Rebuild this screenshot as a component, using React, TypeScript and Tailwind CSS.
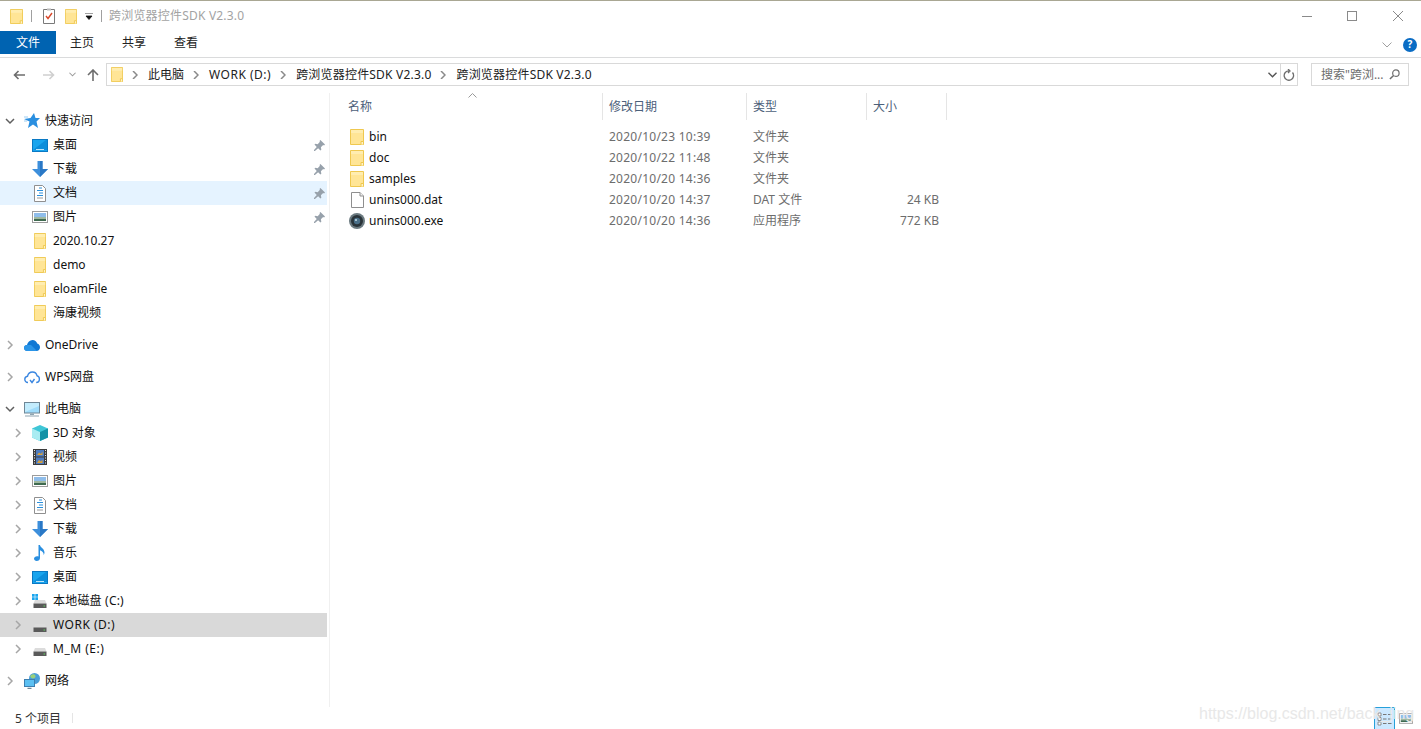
import React from 'react';

const FONT = "font-['Noto_Sans','Noto_Sans_CJK_SC',sans-serif]";

const Folder = ({ className = 'w-[14px] h-4' }: { className?: string }) => (
  <svg viewBox="0 0 14 16" className={className} preserveAspectRatio="none">
    <path d="M.5 .5h13v15H.5z" fill="#ffe596" stroke="#efc84f" />
    <path d="M1 1h12v3H1z" fill="#ffedb0" />
    <path d="M11 15.500v-3h2.500v3" fill="#fff3c8" stroke="#efc84f" />
  </svg>
);

const Chevron = ({ open, className = '' }: { open?: boolean; className?: string }) => (
  <svg viewBox="0 0 10 10" className={`w-[10px] h-[10px] ${className}`}>
    {open ? (
      <path d="M1 3l4 4 4-4" fill="none" stroke="#5f5f5f" strokeWidth="1.5" />
    ) : (
      <path d="M3 1l4 4-4 4" fill="none" stroke="#a6a6a6" strokeWidth="1.5" />
    )}
  </svg>
);

const Desktop = () => (
  <svg viewBox="0 0 16 13" className="w-4 h-[13px]">
    <rect x=".5" y=".5" width="15" height="12" fill="#1aa5ee" stroke="#0a79c4" />
    <path d="M1 11L14 1h1v10z" fill="#0d8edb" />
    <path d="M4 10.500h8" stroke="#bfe6fb" />
  </svg>
);

const Download = () => (
  <svg viewBox="0 0 16 16" className="w-4 h-4">
    <path d="M5.500 0h5v8H16l-8 8-8-8h5.500z" fill="#3d8fdc" />
    <path d="M8 0h2.500v8H16l-8 8z" fill="#2a78c6" />
  </svg>
);

const Doc = () => (
  <svg viewBox="0 0 12 17" className="w-3 h-[17px]">
    <path d="M.5.500h8l3 3v13H.5z" fill="#fff" stroke="#8f8f8f" />
    <path d="M5 3h3M3 5.500h6M5 8h4M3 10.500h6" stroke="#2b8fdb" />
    <path d="M3 13h6" stroke="#9a9a9a" />
  </svg>
);

const Picture = ({ className = 'w-4 h-3' }: { className?: string }) => (
  <svg viewBox="0 0 16 12" className={className}>
    <rect x=".5" y=".5" width="15" height="11" fill="#fff" stroke="#9c9c9c" />
    <rect x="2" y="2" width="12" height="4" fill="#8fbdea" />
    <rect x="2" y="6" width="12" height="2" fill="#9fb8a0" />
    <rect x="2" y="8" width="12" height="2" fill="#3f6a50" />
  </svg>
);

const OneDrive = () => (
  <svg viewBox="0 0 16 11" className="w-4 h-[11px]">
    <path d="M3.500 11C1 11 0 9.500 0 8c0-1.700 1.300-3 3-3 .7-2.800 2.800-5 5.500-5 2.300 0 4 1.400 4.700 3.500C15 4 16 5.500 16 7.300 16 9.500 14.500 11 12.500 11z" fill="#0f78d4" />
    <path d="M3.500 11C1 11 0 9.500 0 8c0-1.700 1.300-3 3-3h4l6 6z" fill="#2a95e8" />
  </svg>
);

const WpsCloud = () => (
  <svg viewBox="0 0 16 13" className="w-4 h-[13px]">
    <path d="M4 11.500C2 11.500 .8 10 .8 8.300 .8 6.700 2 5.500 3.500 5.300 4 3 6 1 8.500 1c2.300 0 4 1.500 4.500 3.700 1.500.3 2.400 1.700 2.400 3.300 0 2-1.300 3.500-3.200 3.500" fill="none" stroke="#3a86e0" strokeWidth="1.400" />
    <path d="M6 9l2 2.500L10.500 8" fill="none" stroke="#3a86e0" strokeWidth="1.400" />
  </svg>
);

const Computer = () => (
  <svg viewBox="0 0 16 15" className="w-4 h-[15px]">
    <rect x=".5" y=".5" width="15" height="10.500" fill="#9fdcfb" stroke="#6f8796" />
    <path d="M1 1h14v3L1 10z" fill="#c2ecfd" />
    <path d="M6 11.500h4v1.500H6z" fill="#8fa4b0" />
    <path d="M1 14h14" stroke="#8fa4b0" />
  </svg>
);

const Cube = () => (
  <svg viewBox="0 0 16 16" className="w-4 h-4">
    <path d="M8 0l8 3.500v9L8 16l-8-3.500v-9z" fill="#3fc6d6" />
    <path d="M0 3.500L8 7v9l-8-3.500z" fill="#a9ecf2" />
    <path d="M16 3.500L8 7v9l8-3.500z" fill="#1392a6" />
  </svg>
);

const Film = () => (
  <svg viewBox="0 0 14 16" className="w-[14px] h-4">
    <rect width="14" height="16" fill="#3c3c3c" />
    <rect x="3" y="1" width="8" height="6.500" fill="#4e7cc0" />
    <rect x="3" y="8.500" width="8" height="6.500" fill="#4e7cc0" />
    <path d="M4 6l2-2.500L8 5l1.500-2.500V6z" fill="#d8a13b" />
    <path d="M4 14l2-3 2 1.500 1.500-2V14z" fill="#d8a13b" />
    <path d="M1 1.500h1M1 4h1M1 6.500h1M1 9h1M1 11.500h1M1 14h1M12 1.500h1M12 4h1M12 6.500h1M12 9h1M12 11.500h1M12 14h1" stroke="#e8e8e8" />
  </svg>
);

const Music = () => (
  <svg viewBox="0 0 12 16" className="w-3 h-4">
    <path d="M4.500 0h1.500c.3 2.500 4.500 3.500 4.500 7.500 0 1-.3 1.800-.8 2.500.2-2.500-1.700-4-3.700-4.700V13c0 1.800-1.500 3-3.300 3C1.200 16 0 15 0 13.800c0-1.500 1.500-2.600 3-2.600.6 0 1.100.1 1.500.3z" fill="#2a8fe0" />
  </svg>
);

const Drive = ({ win }: { win?: boolean }) => (
  <svg viewBox="0 0 16 14" className="w-4 h-[14px]">
    {win && <path d="M0 0h2.700v2.700H0zM3.300 0H6v2.700H3.300zM0 3.300h2.700V6H0zM3.300 3.300H6V6H3.300z" fill="#1aa5ee" />}
    <path d="M3 6h10l1.500 3.500h-13z" fill="#dcdcdc" />
    <rect x="1.500" y="9.500" width="13" height="4.500" fill="#5a5a5a" />
    <rect x="11.500" y="11.500" width="1.500" height="1" fill="#5fd35f" />
  </svg>
);

const Network = () => (
  <svg viewBox="0 0 16 16" className="w-4 h-4">
    <circle cx="10.500" cy="5.500" r="5.500" fill="#4a9fd8" />
    <path d="M7 2c2-1.500 4-1 4.500 1S9 6 7.500 5 6 3 7 2z" fill="#9ad07a" />
    <rect x=".5" y="6.500" width="10" height="7" fill="#5cc0f2" stroke="#3d7fb0" />
    <path d="M3.500 15.500h4" stroke="#6f8796" strokeWidth="1.500" />
  </svg>
);

const ExeIcon = () => (
  <svg viewBox="0 0 16 16" className="w-4 h-4">
    <circle cx="8" cy="8" r="8" fill="#6b7a80" />
    <circle cx="8" cy="8" r="6" fill="#2a343a" />
    <circle cx="8" cy="8" r="3.200" fill="#4a6f88" />
    <circle cx="7" cy="7" r="1" fill="#c8dfe8" />
  </svg>
);

const DatIcon = () => (
  <svg viewBox="0 0 13 16" className="w-[13px] h-4">
    <path d="M.5.500h8.500l3.500 3.500v11.500H.5z" fill="#fff" stroke="#8f8f8f" />
    <path d="M9 .5V4h3.500" fill="#f2f2f2" stroke="#8f8f8f" />
  </svg>
);

const Pin = () => (
  <svg viewBox="0 0 12 12" className="w-[11px] h-[11px]">
    <path d="M7 0l5 5-1 1-1-.5L7.500 8 8 10.500 7 11.500 4.500 9 1 12l-1 0 0-1 3-3.500L.5 5 1.500 4 4 4.500 6.500 2 6 1z" fill="#97a1ab" />
  </svg>
);

type NavItem = { label: string; icon: React.ReactNode; sub?: boolean; open?: boolean; noChevron?: boolean; pin?: boolean; bg?: string; gap?: boolean; track?: string };

const NAV: NavItem[] = [
  { label: '快速访问', open: true, icon: <svg viewBox="0 0 16 16" className="w-4 h-4"><path d="M10 0l1.500 5H16l-3.500 3.500L14 15l-5-3.500L4 15l1.500-6.500L0 6l6.500-1z" fill="#2a8fe0" /><path d="M0 4h4M0 8h3" stroke="#9ccdf2" /></svg> },
  { label: '桌面', sub: true, noChevron: true, pin: true, icon: <Desktop /> },
  { label: '下载', sub: true, noChevron: true, pin: true, icon: <Download /> },
  { label: '文档', sub: true, noChevron: true, pin: true, icon: <Doc />, bg: 'bg-[#e5f3ff]' },
  { label: '图片', sub: true, noChevron: true, pin: true, icon: <Picture /> },
  { label: '2020.10.27', sub: true, noChevron: true, icon: <Folder className="w-3 h-4" /> },
  { label: 'demo', sub: true, noChevron: true, icon: <Folder className="w-3 h-4" /> },
  { label: 'eloamFile', sub: true, noChevron: true, icon: <Folder className="w-3 h-4" /> },
  { label: '海康视频', sub: true, noChevron: true, icon: <Folder className="w-3 h-4" /> },
  { label: 'OneDrive', gap: true, icon: <OneDrive /> },
  { label: 'WPS网盘', gap: true, icon: <WpsCloud /> },
  { label: '此电脑', gap: true, open: true, icon: <Computer /> },
  { label: '3D 对象', sub: true, icon: <Cube /> },
  { label: '视频', sub: true, icon: <Film /> },
  { label: '图片', sub: true, icon: <Picture /> },
  { label: '文档', sub: true, icon: <Doc /> },
  { label: '下载', sub: true, icon: <Download /> },
  { label: '音乐', sub: true, icon: <Music /> },
  { label: '桌面', sub: true, icon: <Desktop /> },
  { label: '本地磁盘 (C:)', sub: true, icon: <Drive win />, track: 'tracking-[0.2px]' },
  { label: 'WORK (D:)', sub: true, icon: <Drive />, bg: 'bg-[#d9d9d9]', track: 'tracking-[0.5px]' },
  { label: 'M_M (E:)', sub: true, icon: <Drive />, track: 'tracking-[0.5px]' },
  { label: '网络', gap: true, icon: <Network /> },
];

const FILES = [
  { name: 'bin', date: '2020/10/23 10:39', type: '文件夹', size: '', icon: <Folder /> },
  { name: 'doc', date: '2020/10/22 11:48', type: '文件夹', size: '', icon: <Folder /> },
  { name: 'samples', date: '2020/10/20 14:36', type: '文件夹', size: '', icon: <Folder /> },
  { name: 'unins000.dat', date: '2020/10/20 14:37', type: 'DAT 文件', size: '24 KB', icon: <DatIcon /> },
  { name: 'unins000.exe', date: '2020/10/20 14:36', type: '应用程序', size: '772 KB', icon: <ExeIcon /> },
];

const NavRow = ({ item }: { item: NavItem }) => (
  <div className={`flex items-center h-6 w-[327px] ${item.gap ? 'mt-2' : ''} ${item.bg ?? ''} ${item.sub ? 'pl-[13px]' : 'pl-[5px]'}`}>
    <div className="w-[10px] flex justify-center">{!item.noChevron && <Chevron open={item.open} />}</div>
    <div className="w-[24px] ml-[5px] flex justify-center">{item.icon}</div>
    <span className={`ml-[1px] text-[12px] text-[#111] ${item.track ?? ''}`}>{item.label}</span>
    {item.pin && <div className="ml-auto mr-[2px]"><Pin /></div>}
  </div>
);

const Crumb = ({ text, track = '' }: { text: string; track?: string }) => (
  <>
    <span className={`text-[12px] text-[#222] whitespace-nowrap ${track}`}>{text}</span>
    <svg viewBox="0 0 6 8" className="w-[6px] h-2 ml-[9px] mr-[10px]"><path d="M1 0l4 4-4 4" fill="none" stroke="#8a8a8a" strokeWidth="1.500" /></svg>
  </>
);

const HeadCell = ({ label, className }: { label: string; className: string }) => (
  <div className={`h-full flex items-center pl-[6px] border-r border-[#e5e5e5] text-[12px] text-[#4c607a] ${className}`}>{label}</div>
);

export default function App() {
  return (
    <div className={`relative w-[1421px] h-[729px] overflow-hidden bg-white flex flex-col ${FONT}`}>
      <div className="h-px bg-[#a9a793]" />

      {/* title bar */}
      <div className="h-[30px] flex items-center">
        <div className="ml-[10px]"><Folder className="w-[13px] h-[15px]" /></div>
        <div className="ml-[8px] w-px h-3 bg-[#a0a0a0]" />
        <svg viewBox="0 0 12 16" className="ml-[11px] w-3 h-4">
          <path d="M.5 1.500h11v14H.5z" fill="#fff" stroke="#7a7a7a" />
          <path d="M3 8l2 2.500L9 5" fill="none" stroke="#d9482b" strokeWidth="1.400" />
          <path d="M4 .5h4v2H4z" fill="#bbb" />
        </svg>
        <div className="ml-[10px]"><Folder className="w-3 h-[15px]" /></div>
        <svg viewBox="0 0 8 7" className="ml-[8px] w-2 h-[7px]"><path d="M0 0h8M1 3h6L4 6.500z" fill="#111" stroke="#111" strokeWidth=".8" /></svg>
        <div className="ml-[8px] w-px h-3 bg-[#a0a0a0]" />
        <span className="ml-[7px] text-[12px] text-[#a3a3a3] tracking-[0.2px]">跨浏览器控件SDK V2.3.0</span>
        <div className="ml-auto flex items-center">
          <div className="w-[10px] h-px bg-[#8a8a8a] mr-[35px]" />
          <div className="w-[10px] h-[10px] border border-[#8a8a8a] mr-[36px]" />
          <svg viewBox="0 0 10 10" className="w-[10px] h-[10px] mr-[18px]"><path d="M0 0l10 10M10 0L0 10" stroke="#8a8a8a" /></svg>
        </div>
      </div>

      {/* ribbon tabs */}
      <div className="h-[26px] flex items-start">
        <div className="w-[56px] h-[23px] bg-[#0063b1] text-white text-[12px] flex items-center justify-center">文件</div>
        <div className="ml-[14px] flex gap-7 h-[23px] items-center text-[12px] text-[#222]">
          <span>主页</span>
          <span>共享</span>
          <span>查看</span>
        </div>
        <div className="ml-auto flex items-center h-[23px] mt-[2px]">
          <svg viewBox="0 0 10 6" className="w-[10px] h-[6px] mr-[11px]"><path d="M.5.500L5 5 9.500.500" fill="none" stroke="#a0a0a0" /></svg>
          <div className="w-[14px] h-[14px] mr-[4px] rounded-full bg-[#0a6cc4] text-white text-[10px] font-bold flex items-center justify-center">?</div>
        </div>
      </div>
      <div className="h-px bg-[#dadbdc]" />

      {/* address row */}
      <div className="h-[35px] pb-[2px] flex items-center">
        <svg viewBox="0 0 12 10" className="ml-[13px] w-3 h-[10px]"><path d="M12 5H1.500M5.500 1l-4 4 4 4" fill="none" stroke="#6d6d6d" strokeWidth="1.600" /></svg>
        <svg viewBox="0 0 12 10" className="ml-[18px] w-3 h-[10px]"><path d="M0 5h10.500M6.500 1l4 4-4 4" fill="none" stroke="#cfcfcf" strokeWidth="1.600" /></svg>
        <svg viewBox="0 0 8 5" className="ml-[14px] w-[7px] h-[5px]"><path d="M.5.500L4 4 7.500.500" fill="none" stroke="#9a9a9a" strokeWidth="1.200" /></svg>
        <svg viewBox="0 0 12 12" className="ml-[11px] w-3 h-3"><path d="M6 12V1.500M1 6l5-5 5 5" fill="none" stroke="#6d6d6d" strokeWidth="1.600" /></svg>
        <div className="ml-[7px] w-[1192px] h-[23px] border border-[#d9d9d9] flex items-center">
          <div className="ml-[4px]"><Folder className="w-3 h-[15px]" /></div>
          <svg viewBox="0 0 6 8" className="ml-[9px] w-[6px] h-2 mr-[10px]"><path d="M1 0l4 4-4 4" fill="none" stroke="#8a8a8a" strokeWidth="1.500" /></svg>
          <Crumb text="此电脑" />
          <Crumb text="WORK (D:)" track="tracking-[0.5px]" />
          <Crumb text="跨浏览器控件SDK V2.3.0" track="tracking-[0.2px]" />
          <span className="text-[12px] text-[#222] whitespace-nowrap tracking-[0.2px]">跨浏览器控件SDK V2.3.0</span>
          <svg viewBox="0 0 10 6" className="ml-auto mr-[3px] w-[9px] h-[6px]"><path d="M.5.500L5 5 9.500.500" fill="none" stroke="#555" strokeWidth="1.600" /></svg>
          <div className="w-px h-full bg-[#d9d9d9]" />
          <svg viewBox="0 0 12 12" className="mx-[2px] w-3 h-3"><path d="M9.500 3.500A4.700 4.700 0 1 1 6 1.800M5 0l2 2-2 2" fill="none" stroke="#6d6d6d" strokeWidth="1.300" /></svg>
        </div>
        <div className="ml-[13px] w-[98px] h-[23px] border border-[#d9d9d9] flex items-center pl-[9px]">
          <span className="text-[12px] text-[#6d6d6d] whitespace-nowrap">搜索"跨浏...</span>
          <svg viewBox="0 0 12 12" className="ml-auto mr-[8px] w-[11px] h-[11px]"><circle cx="7.500" cy="4.500" r="3.500" fill="none" stroke="#6d6d6d" strokeWidth="1.300" /><path d="M5 7l-4 4" stroke="#6d6d6d" strokeWidth="1.600" /></svg>
        </div>
      </div>

      {/* body */}
      <div className="flex-1 flex min-h-0">
        <div className="w-[330px] pt-4 border-r border-[#f0f0f0]">
          {NAV.map((item, i) => (
            <NavRow key={i} item={item} />
          ))}
        </div>
        <div className="relative flex-1">
          <div className="h-[27px] flex">
            <div className="w-[273px] h-full flex items-center pl-[18px] border-r border-[#e5e5e5] text-[12px] text-[#4c607a]">名称</div>
            <HeadCell label="修改日期" className="w-[144px]" />
            <HeadCell label="类型" className="w-[120px]" />
            <HeadCell label="大小" className="w-[80px]" />
          </div>
          <svg viewBox="0 0 9 5" className="absolute left-[138px] top-0 w-[9px] h-[5px]"><path d="M.5 4.500L4.500.5l4 4" fill="none" stroke="#9a9a9a" /></svg>
          <div className="pt-[6px]">
            {FILES.map((f) => (
              <div key={f.name} className="flex items-center h-[21px] text-[12px]">
                <div className="w-[273px] flex items-center pl-[19px]">
                  <div className="w-[18px] flex justify-center -ml-[1px]">{f.icon}</div>
                  <span className="ml-[3px] text-[#111]">{f.name}</span>
                </div>
                <span className="w-[144px] pl-[6px] text-[#6d6d6d] tracking-[0.25px]">{f.date}</span>
                <span className="w-[120px] pl-[6px] text-[#6d6d6d]">{f.type}</span>
                <span className="w-[72px] text-right text-[#6d6d6d]">{f.size}</span>
              </div>
            ))}
          </div>
        </div>
      </div>

      {/* status bar */}
      <div className="h-[22px] flex items-center">
        <span className="ml-[15px] mt-[2px] text-[12px] text-[#333]">5 个项目</span>
        <div className="ml-[11px] w-px h-[10px] bg-[#e5e5e5]" />
        <div className="ml-auto flex items-center h-full">
          <div className="w-[21px] h-full bg-[#cce8ff] border-x border-t border-[#26a0da] flex items-center justify-center">
            <svg viewBox="0 0 15 14" className="w-[15px] h-[14px]">
              <path d="M1 1h3v3H1zM1 5.500h3v3H1zM1 10h3v3H1z" fill="#fff" stroke="#777" strokeWidth=".8" />
              <path d="M6 2.500h3.500M11 2.500h3.500M6 7h3.500M11 7h3.500M6 11.500h3.500M11 11.500h3.500" stroke="#777" />
            </svg>
          </div>
          <div className="ml-[4px] mr-[8px]"><Picture className="w-[14px] h-[11px]" /></div>
        </div>
      </div>

      {/* csdn watermark */}
      <span className="absolute left-[1199px] top-[702px] font-['Liberation_Sans',sans-serif] text-[16px] text-[#e8e8e8] whitespace-nowrap">https://blog.csdn.net/back_jing</span>
    </div>
  );
}
